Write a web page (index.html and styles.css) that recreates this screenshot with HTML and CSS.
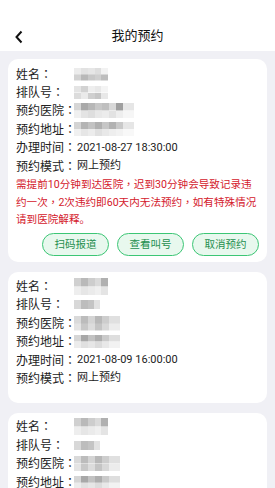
FILE: index.html
```html
<!DOCTYPE html>
<html lang="zh-CN">
<head>
    <meta charset="UTF-8">
    <meta name="viewport" content="width=device-width, initial-scale=1.0">
    <title>我的预约</title>
    <link rel="stylesheet" href="styles.css">
</head>
<body>

    <div class="page">
        <div class="header">
            <div class="nav">
                <span class="back">
                    <svg width="10" height="14" viewBox="0 0 10 14"><path d="M7.5 1.5 L2.5 7 L7.5 12.5" fill="none" stroke="#111" stroke-width="2"/></svg>
                </span>
                <h2>我的预约</h2>
            </div>
        </div>

        <div class="list">
            <div class="card">
                <div class="row"><span class="label">姓名<i lang="zh-TW">：</i></span><span class="blur b-name"></span></div>
                <div class="row"><span class="label">排队号<i lang="zh-TW">：</i></span><span class="blur b-queue"></span></div>
                <div class="row"><span class="label">预约医院<i lang="zh-TW">：</i></span><span class="blur b-wide"></span></div>
                <div class="row"><span class="label">预约地址<i lang="zh-TW">：</i></span><span class="blur b-wide b-alt"></span></div>
                <div class="row"><span class="label">办理时间<i lang="zh-TW">：</i></span><span class="value">2021-08-27 18:30:00</span></div>
                <div class="row"><span class="label">预约模式<i lang="zh-TW">：</i></span><span class="value">网上预约</span></div>
                <p class="notice">需提前10分钟到达医院<i lang="zh-TW">，</i>迟到30分钟会导致记录违约一次<i lang="zh-TW">，</i>2次违约即60天内无法预约<i lang="zh-TW">，</i>如有特殊情况请到医院解释。</p>
                <div class="actions">
                    <button class="btn">扫码报道</button>
                    <button class="btn">查看叫号</button>
                    <button class="btn">取消预约</button>
                </div>
            </div>

            <div class="card no-actions">
                <div class="row"><span class="label">姓名<i lang="zh-TW">：</i></span><span class="blur b-name tall"></span></div>
                <div class="row"><span class="label">排队号<i lang="zh-TW">：</i></span><span class="blur b-short"></span></div>
                <div class="row"><span class="label">预约医院<i lang="zh-TW">：</i></span><span class="blur b-mid"></span></div>
                <div class="row"><span class="label">预约地址<i lang="zh-TW">：</i></span><span class="blur b-mid b-alt"></span></div>
                <div class="row"><span class="label">办理时间<i lang="zh-TW">：</i></span><span class="value">2021-08-09 16:00:00</span></div>
                <div class="row"><span class="label">预约模式<i lang="zh-TW">：</i></span><span class="value">网上预约</span></div>
            </div>

            <div class="card no-actions">
                <div class="row"><span class="label">姓名<i lang="zh-TW">：</i></span><span class="blur b-name tall"></span></div>
                <div class="row"><span class="label">排队号<i lang="zh-TW">：</i></span><span class="blur b-short"></span></div>
                <div class="row"><span class="label">预约医院<i lang="zh-TW">：</i></span><span class="blur b-mid"></span></div>
                <div class="row"><span class="label">预约地址<i lang="zh-TW">：</i></span><span class="blur b-mid b-alt"></span></div>
                <div class="row"><span class="label">办理时间<i lang="zh-TW">：</i></span><span class="value">2021-08-05 09:00:00</span></div>
                <div class="row"><span class="label">预约模式<i lang="zh-TW">：</i></span><span class="value">网上预约</span></div>
            </div>
        </div>
    </div>

</body>
</html>
```

FILE: styles.css
```css
html, body {
    margin: 0;
    height: 100%;
}
body {
    font-family: Roboto, "Noto Sans CJK SC", sans-serif;
    background-color: #f0f0f5;
    color: #222;
}
/* 标点居中 */
i {
    font-style: normal;
    font-family: "Noto Sans CJK TC", sans-serif;
    line-height: inherit;
}
.page {
    height: 100vh;
    display: flex;
    flex-direction: column;
    overflow: hidden;
}
.header {
    background: #fff;
    padding-top: 21px;
}
.nav {
    height: 30px;
    display: flex;
    align-items: center;
    justify-content: center;
    position: relative;
}
.back {
    position: absolute;
    left: 14px;
    top: 9px;
    line-height: 0;
}
h2 {
    margin: 0;
    font-size: 13px;
    line-height: 16px;
    font-weight: normal;
    color: #111;
}
.list {
    flex: 1;
    overflow: hidden;
    padding: 8px 8px 0;
}
.card {
    background: #fff;
    border-radius: 10px;
    padding: 6px 8px 6px;
    margin-bottom: 10px;
}
.card.no-actions {
    padding-top: 5px;
    padding-bottom: 15px;
}
.row {
    display: flex;
    align-items: center;
    height: 18.4px;
    font-size: 12px;
    line-height: 16px;
}
.label {
    width: 61px;
    flex-shrink: 0;
}
.value {
    font-size: 11px;
}
.blur {
    display: inline-block;
    margin-left: -3px;
    height: 13px;
    filter: blur(0.6px);
}
.b-name {
    width: 34px;
    background:
        linear-gradient(to right, #ececec 0 7px, #e2e2e2 7px 14px, #e6e6e6 14px 21px, #dedede 21px 27px, #f2f2f2 27px) top / 100% 50% no-repeat,
        linear-gradient(to right, #d2d2d2 0 7px, #b8b8b8 7px 14px, #c8c8c8 14px 21px, #cfcfcf 21px 27px, #bdbdbd 27px) bottom / 100% 50% no-repeat;
}
.b-name.tall {
    height: 17px;
    background:
        linear-gradient(to right, #d0d0d0 0 7px, #b9b9b9 7px 14px, #cdcdcd 14px 21px, #dadada 21px 27px, #b0b0b0 27px) top / 100% 50% no-repeat,
        linear-gradient(to right, #eeeeee 0 7px, #e6e6e6 7px 14px, #ebebeb 14px 21px, #f0f0f0 21px 27px, #e4e4e4 27px) bottom / 100% 50% no-repeat;
}
.b-queue {
    width: 34px;
    background:
        linear-gradient(to right, #e4e4e4 0 7px, #d2d2d2 7px 14px, #eeeeee 14px 21px, #e8e8e8 21px 27px, #f4f4f4 27px) top / 100% 50% no-repeat,
        linear-gradient(to right, #dcdcdc 0 7px, #eaeaea 7px 14px, #cfcfcf 14px 21px, #c6c6c6 21px 27px, #e8e8e8 27px) bottom / 100% 50% no-repeat;
}
.b-short {
    width: 26px;
    height: 9px;
    background: linear-gradient(to right, #d8d8d8 0 7px, #bdbdbd 7px 14px, #c4c4c4 14px 20px, #e2e2e2 20px);
}
.b-wide {
    width: 60px;
    height: 15px;
    background:
        linear-gradient(to right, #d6d6d6 0 7px, #a9a9a9 7px 14px, #b7b7b7 14px 21px, #c7c7c7 21px 28px, #bfbfbf 28px 35px, #d8d8d8 35px 42px, #9f9f9f 42px 49px, #e6e6e6 49px) top / 100% 50% no-repeat,
        linear-gradient(to right, #f0f0f0 0 7px, #e4e4e4 7px 14px, #dedede 14px 21px, #e8e8e8 21px 28px, #ececec 28px 35px, #e2e2e2 35px 42px, #eeeeee 42px 49px, #f6f6f6 49px) bottom / 100% 50% no-repeat;
}
.b-wide.b-alt {
    height: 14px;
    background:
        linear-gradient(to right, #d4d4d4 0 7px, #b4b4b4 7px 14px, #c2c2c2 14px 21px, #b0b0b0 21px 28px, #c6c6c6 28px 35px, #b2b2b2 35px 42px, #c9c9c9 42px 49px, #e6e6e6 49px) top / 100% 50% no-repeat,
        linear-gradient(to right, #f0f0f0 0 7px, #e6e6e6 7px 14px, #ececec 14px 21px, #e0e0e0 21px 28px, #e8e8e8 28px 35px, #eeeeee 35px 42px, #f2f2f2 42px 49px, #f8f8f8 49px) bottom / 100% 50% no-repeat;
}
.b-mid {
    width: 46px;
    height: 15px;
    background:
        linear-gradient(to right, #dadada 0 7px, #bcbcbc 7px 14px, #d4d4d4 14px 21px, #b8b8b8 21px 28px, #cdcdcd 28px 35px, #e0e0e0 35px) top / 100% 50% no-repeat,
        linear-gradient(to right, #e4e4e4 0 7px, #c8c8c8 7px 14px, #dcdcdc 14px 21px, #c4c4c4 21px 28px, #d8d8d8 28px 35px, #ececec 35px) bottom / 100% 50% no-repeat;
}
.b-mid.b-alt {
    height: 13px;
    background:
        linear-gradient(to right, #d6d6d6 0 7px, #a8a8a8 7px 14px, #c2c2c2 14px 21px, #aeaeae 21px 28px, #cacaca 28px 35px, #dedede 35px) top / 100% 50% no-repeat,
        linear-gradient(to right, #ececec 0 7px, #e0e0e0 7px 14px, #e6e6e6 14px 21px, #dcdcdc 21px 28px, #e8e8e8 28px 35px, #f2f2f2 35px) bottom / 100% 50% no-repeat;
}
.notice {
    margin: 0;
    color: #d4202c;
    font-size: 10.6px;
    line-height: 17px;
}
.actions {
    display: flex;
    justify-content: flex-end;
    gap: 8px;
    height: 23px;
    margin-top: 5px;
}
.btn {
    width: 67px;
    height: 23px;
    padding: 0;
    margin: 0;
    border: 1px solid #3cc675;
    border-radius: 12px;
    background: #e8f8ee;
    color: #1f8f4e;
    font-family: Roboto, "Noto Sans CJK SC", sans-serif;
    font-size: 10.5px;
    line-height: 21px;
}
```
